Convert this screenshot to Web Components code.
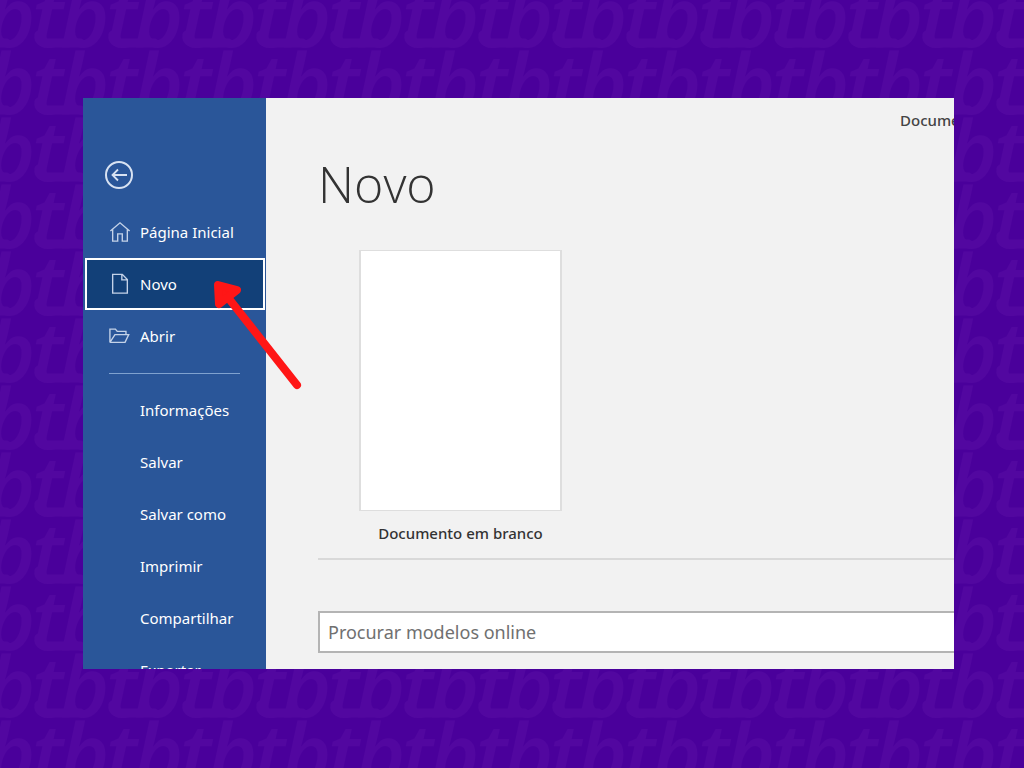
<!DOCTYPE html>
<html lang="pt-BR">
<head>
<meta charset="utf-8">
<meta name="viewport" content="width=device-width, initial-scale=1">
<title>Novo documento</title>
<style>
  body { margin: 0; background: #4a009b; font-family: "Noto Sans", "Open Sans", sans-serif; }
</style>
</head>
<body>
<brand-backdrop>
  <backstage-window>
    <backstage-nav slot="nav">
      <nav-item icon="home">Página Inicial</nav-item>
      <nav-item icon="file" current>Novo</nav-item>
      <nav-item icon="folder">Abrir</nav-item>
      <nav-divider></nav-divider>
      <nav-item>Informações</nav-item>
      <nav-item>Salvar</nav-item>
      <nav-item>Salvar como</nav-item>
      <nav-item>Imprimir</nav-item>
      <nav-item>Compartilhar</nav-item>
      <nav-item>Exportar</nav-item>
    </backstage-nav>
    <new-document-page>
      <span slot="window-title">Documento</span>
      <span slot="heading">Novo</span>
      <template-card>Documento em branco</template-card>
      <template-search slot="search" label="Procurar modelos online"></template-search>
    </new-document-page>
    <pointer-arrow slot="overlay"></pointer-arrow>
  </backstage-window>
</brand-backdrop>

<script>
  const define = (name, markup, setup) => {
    const template = document.createElement('template');
    template.innerHTML = markup;
    customElements.define(name, class extends HTMLElement {
      constructor() {
        super();
        this.attachShadow({ mode: 'open' }).append(template.content.cloneNode(true));
      }
      connectedCallback() {
        if (setup) setup(this, this.shadowRoot);
      }
    });
  };

  const icons = {
    home: '<path d="M1.500 11 12 2l10.500 9M4 9v13h5.500v-8h5v8H20V9"/>',
    file: '<path d="M4 1.500h10.500l5.500 5.500v15H4zM14 1.500v6h6"/>',
    folder: '<path d="M1 19V4.500h6l2 2.500h9.500v3.500M1 19h16.500l4-8.500H6.500L1 19"/>'
  };

  /* Purple wall with the repeated "tb" mark */
  define('brand-backdrop', `
    <style>
      :host { display: grid; min-height: 100vh; background: #4a009b; }
      svg, main { grid-area: 1 / 1; }
      svg { width: 100%; height: 100%; display: block; min-height: 0; }
      text { font: italic 600 84px "Open Sans", sans-serif; fill: #5207a0; }
      .joint { fill: none; stroke: #5207a0; stroke-width: 9; stroke-linecap: round; }
      main { display: flex; box-sizing: border-box; padding: 98px 70px 99px 83px; min-width: 0; }
      ::slotted(*) { flex: 1; min-width: 0; }
    </style>
    <svg aria-hidden="true">
      <defs>
        <pattern id="mark" width="74" height="67" patternUnits="userSpaceOnUse" patternTransform="translate(32 48)">
          <g id="tile">
            <text x="0 28" y="66">tb</text>
            <path class="joint" d="M7 54Q6 62 16 62H48"/>
          </g>
          <use href="#tile" x="-74"/>
          <use href="#tile" y="-67"/>
          <use href="#tile" x="-74" y="-67"/>
          <use href="#tile" y="67"/>
          <use href="#tile" x="-74" y="67"/>
        </pattern>
      </defs>
      <rect width="100%" height="100%" fill="url(#mark)"/>
    </svg>
    <main><slot></slot></main>
  `);

  define('backstage-window', `
    <style>
      :host { display: grid; grid-template-columns: 183px minmax(0, 1fr); position: relative; overflow: hidden; background: #f2f2f2; contain: size; }
      ::slotted(*) { min-width: 0; }
    </style>
    <slot name="nav"></slot><slot></slot><slot name="overlay"></slot>
  `);

  define('backstage-nav', `
    <style>
      :host { display: block; background: #2a5699; padding-top: 63px; }
      button { display: block; width: 28px; height: 28px; margin: 0 0 17px 22px; padding: 0; border: 0; background: none; }
      svg { display: block; fill: none; stroke: #d8e2f2; stroke-width: 2; }
    </style>
    <button aria-label="Voltar">
      <svg width="28" height="28" viewBox="0 0 28 28"><circle cx="14" cy="14" r="13"/><path d="M22 14H8M13 8.500 7.500 14l5.500 5.500" stroke-width="1.800"/></svg>
    </button>
    <nav><slot></slot></nav>
  `);

  define('nav-item', `
    <style>
      :host { display: block; }
      a { display: flex; align-items: center; gap: 9px; box-sizing: border-box; height: 52px; margin: 0 1px 0 2px; padding-left: 24px;
          color: #fff; text-decoration: none; font-size: 15px; font-weight: 400; line-height: 20px; white-space: nowrap; }
      :host([current]) a { background: #124078; border: 2px solid #fff; padding-left: 22px; }
      svg { width: 22px; height: 22px; fill: none; stroke: #c4d2e8; stroke-width: 1.500; flex: none; }
    </style>
    <a href="#"><svg viewBox="0 0 24 24" aria-hidden="true"></svg><slot></slot></a>
  `, (host, root) => {
    root.querySelector('svg').innerHTML = icons[host.getAttribute('icon')] || '';
    if (host.hasAttribute('current')) root.querySelector('a').setAttribute('aria-current', 'page');
  });

  define('nav-divider', `
    <style>
      :host { display: block; padding: 11px 26px 10px; }
      hr { margin: 0; border: 0; border-top: 1px solid #7fa2cf; }
    </style>
    <hr>
  `);

  define('new-document-page', `
    <style>
      :host { display: block; padding-left: 52px; overflow: hidden; color: #333; }
      header { width: 54px; margin-left: auto; padding-top: 12px; font-size: 15px; font-weight: 500; line-height: 20px; color: #444; white-space: nowrap; }
      h1 { margin: 22px 0 34px; font: 300 50px/64px "Open Sans", "Noto Sans", sans-serif; color: #333; }
      section { padding: 0 0 15px 41px; border-bottom: 2px solid #d9d9d9; }
      footer { padding-top: 51px; }
    </style>
    <header><slot name="window-title"></slot></header>
    <h1><slot name="heading"></slot></h1>
    <section><slot></slot></section>
    <footer><slot name="search"></slot></footer>
  `);

  define('template-card', `
    <style>
      :host { display: inline-block; vertical-align: top; }
      button { display: block; padding: 0; border: 0; background: none; color: #333; font: 500 15px/20px "Noto Sans", "Open Sans", sans-serif; text-align: center; }
      span { display: block; box-sizing: border-box; width: 203px; height: 261px; margin-bottom: 12px; background: #fff; border: 2px solid #dedede; border-top-width: 1px; border-bottom-width: 1px; }
    </style>
    <button><span></span><slot></slot></button>
  `);

  define('template-search', `
    <style>
      :host { display: block; margin-right: -20px; }
      input { display: block; box-sizing: border-box; width: 100%; height: 42px; padding: 0 8px; border: 2px solid #b4b4b4; border-radius: 0; background: #fff; font: 400 18px/24px "Noto Sans", "Open Sans", sans-serif; }
      input::placeholder { color: #707070; opacity: 1; }
    </style>
    <input type="search">
  `, (host, root) => {
    const input = root.querySelector('input');
    input.placeholder = host.getAttribute('label');
    input.setAttribute('aria-label', host.getAttribute('label'));
  });

  /* Red annotation arrow lying over the menu and the page */
  define('pointer-arrow', `
    <style>
      :host { display: block; position: absolute; left: 127px; top: 178px; width: 96px; height: 120px; pointer-events: none; }
      svg { display: block; }
    </style>
    <svg width="96" height="120" viewBox="0 0 96 120" aria-hidden="true" stroke="#ff1616" stroke-linecap="round" stroke-linejoin="round">
      <path d="M16 19 87 109" stroke-width="8" fill="none"/>
      <path d="M8 9 27 14 9 28Z" stroke-width="8" fill="#ff1616"/>
    </svg>
  `);
</script>
</body>
</html>
